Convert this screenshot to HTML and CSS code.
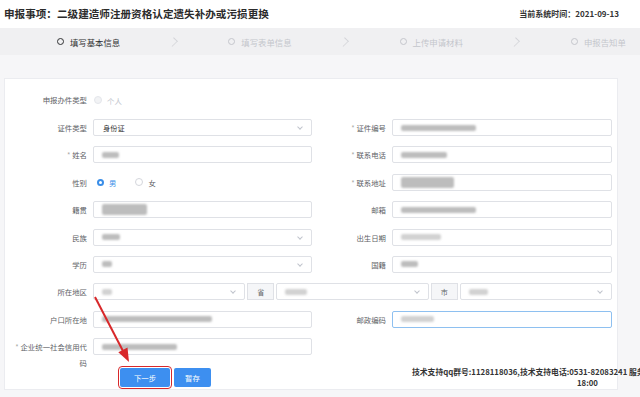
FILE: index.html
```html
<!DOCTYPE html>
<html lang="zh-CN">
<head>
  <meta charset="UTF-8" />
  <title>申报事项</title>
  <link rel="stylesheet" href="styles.css">
</head>
<body>
  <div class="header">
    <div class="title">申报事项：二级建造师注册资格认定遗失补办或污损更换</div>
    <div class="time">当前系统时间：2021-09-13</div>
  </div>

  <div class="steps">
    <div class="step active"><span class="ring"></span>填写基本信息</div>
    <div class="sep"><span class="chev"></span></div>
    <div class="step"><span class="ring"></span>填写表单信息</div>
    <div class="sep"><span class="chev"></span></div>
    <div class="step"><span class="ring"></span>上传申请材料</div>
    <div class="sep"><span class="chev"></span></div>
    <div class="step"><span class="ring"></span>申报告知单</div>
  </div>

  <div class="card">
    <div class="type-row">
      <label class="lbl">申报办件类型</label>
      <span class="radio disabled"></span><span class="opt muted">个人</span>
    </div>

    <div class="form">
      <div class="field">
        <label class="lbl">证件类型</label>
        <div class="ctl select"><span class="val">身份证</span><i class="arrow"></i></div>
      </div>
      <div class="field right">
        <label class="lbl"><em>*</em> 证件编号</label>
        <div class="ctl"><span class="blur w75"></span></div>
      </div>

      <div class="field">
        <label class="lbl"><em>*</em> 姓名</label>
        <div class="ctl"><span class="blur w17"></span></div>
      </div>
      <div class="field right">
        <label class="lbl"><em>*</em> 联系电话</label>
        <div class="ctl"><span class="blur w46"></span></div>
      </div>

      <div class="field">
        <label class="lbl">性别</label>
        <div class="radios">
          <span class="radio checked"></span><span class="opt blue">男</span>
          <span class="radio"></span><span class="opt">女</span>
        </div>
      </div>
      <div class="field right">
        <label class="lbl"><em>*</em> 联系地址</label>
        <div class="ctl"><span class="blur w53 tall"></span></div>
      </div>

      <div class="field">
        <label class="lbl">籍贯</label>
        <div class="ctl"><span class="blur w45 tall"></span></div>
      </div>
      <div class="field right">
        <label class="lbl">邮箱</label>
        <div class="ctl"><span class="blur w75"></span></div>
      </div>

      <div class="field">
        <label class="lbl">民族</label>
        <div class="ctl select"><span class="blur w18"></span><i class="arrow"></i></div>
      </div>
      <div class="field right">
        <label class="lbl">出生日期</label>
        <div class="ctl"><span class="blur w40 light"></span></div>
      </div>

      <div class="field">
        <label class="lbl">学历</label>
        <div class="ctl select"><span class="blur w10"></span><i class="arrow"></i></div>
      </div>
      <div class="field right">
        <label class="lbl">国籍</label>
        <div class="ctl"><span class="blur w17"></span></div>
      </div>

      <div class="field wide">
        <label class="lbl">所在地区</label>
        <div class="area">
          <div class="ctl select"><span class="blur w10 light"></span><i class="arrow"></i></div>
          <span class="addon">省</span>
          <div class="ctl select"><span class="blur w22 light"></span><i class="arrow"></i></div>
          <span class="addon">市</span>
          <div class="ctl select"><span class="blur w19 light"></span><i class="arrow"></i></div>
        </div>
      </div>

      <div class="field">
        <label class="lbl">户口所在地</label>
        <div class="ctl"><span class="blur w110"></span></div>
      </div>
      <div class="field right">
        <label class="lbl">邮政编码</label>
        <div class="ctl focus"><span class="blur w33 light"></span></div>
      </div>

      <div class="field">
        <label class="lbl wrap"><em>*</em> 企业统一社会信用代码</label>
        <div class="ctl"><span class="blur w75"></span></div>
      </div>
    </div>

    <div class="actions">
      <button class="btn next">下一步</button>
      <button class="btn save">暂存</button>
      <div class="support">
        <div class="line">技术支持qq群号:1128118036,技术支持电话:0531-82083241 服务</div>
        <div class="line second">18:00</div>
      </div>
    </div>
  </div>

  <svg class="mark" viewBox="0 0 640 397" width="640" height="397">
    <line x1="95" y1="297" x2="123" y2="351" stroke="#d8282a" stroke-width="2" />
    <polygon points="129,362 127.5,347.5 118.3,352.3" fill="#d8282a" />
  </svg>
</body>
</html>
```

FILE: styles.css
```css
body {
  margin: 0;
  width: 640px;
  height: 397px;
  overflow: hidden;
  position: relative;
  background-color: #f6f6f8;
  font-family: "Noto Sans CJK SC", "Noto Sans", sans-serif;
  color: #303133;
}
.header {
  height: 28px;
  background: #fff;
  display: flex;
  align-items: center;
  justify-content: space-between;
  padding: 0 21px 2px 4px;
  box-sizing: border-box;
}
.title {
  font-size: 10.6px;
  font-weight: bold;
  color: #2b2b2b;
}
.time {
  font-size: 8px;
  font-weight: bold;
  color: #333;
}
.steps {
  height: 27px;
  background: #f0f0f2;
  display: flex;
  align-items: center;
  padding-left: 57px;
  margin-bottom: 23px;
}
.step {
  width: 64px;
  display: flex;
  align-items: center;
  font-size: 8.4px;
  color: #c4c6cc;
  white-space: nowrap;
}
.step .ring {
  width: 5px;
  height: 5px;
  border: 1.2px solid #c4c6cc;
  border-radius: 50%;
  margin-right: 6px;
  flex: none;
}
.step.active {
  color: #303133;
}
.step.active .ring {
  border-color: #303133;
}
.sep {
  width: 107.3px;
  display: flex;
  justify-content: center;
}
.chev {
  width: 7px;
  height: 7px;
  border-top: 1px solid #d2d3d7;
  border-right: 1px solid #d2d3d7;
  transform: rotate(45deg) scaleX(0.7);
  margin-left: -4px;
}
.card {
  margin-left: 4px;
  width: 614px;
  box-sizing: border-box;
  background: #fff;
  border: 1px solid #ebecf0;
  padding: 13px 5px 2px 5px;
}
.lbl {
  width: 77px;
  margin-right: 6px;
  text-align: right;
  font-size: 7.4px;
  line-height: 17px;
  color: #606266;
  flex: none;
}
.lbl em {
  font-style: normal;
  color: #a8a8a8;
}
.lbl.wrap {
  line-height: 16px;
  margin-top: 1px;
}
.type-row {
  height: 16px;
  display: flex;
  align-items: center;
  margin-bottom: 11px;
}
.type-row .lbl {
  line-height: 16px;
}
.radio {
  width: 6px;
  height: 6px;
  border: 1px solid #d4d6dc;
  border-radius: 50%;
  background: #fff;
  margin: 0 5px 0 1px;
  flex: none;
}
.radio.disabled {
  background: #f2f3f5;
  border-color: #e4e6eb;
}
.radio.checked {
  width: 3px;
  height: 3px;
  border: 2.5px solid #3a8ee8;
}
.opt {
  font-size: 7.4px;
  color: #606266;
  margin-right: 18px;
}
.opt.muted {
  color: #c0c4cc;
}
.opt.blue {
  color: #3a8ee8;
}
.form {
  display: grid;
  grid-template-columns: 302px 300px;
  grid-auto-rows: 17px;
  row-gap: 10.4px;
}
.field {
  display: flex;
  align-items: flex-start;
}
.field.right .lbl {
  width: 74px;
}
.field.wide {
  grid-column: span 2;
}
.radios {
  height: 17px;
  display: flex;
  align-items: center;
  padding-left: 3px;
}
.ctl {
  flex: 1;
  height: 17px;
  box-sizing: border-box;
  border: 1px solid #dfe1e6;
  border-radius: 2px;
  background: #fff;
  display: flex;
  align-items: center;
  padding-left: 8px;
  position: relative;
}
.ctl.focus {
  border-color: #8ec0f0;
}
.val {
  font-size: 7.2px;
  color: #303133;
  padding-left: 1px;
}
.arrow {
  position: absolute;
  right: 9px;
  top: 5px;
  width: 3px;
  height: 3px;
  border-right: 1px solid #c0c4cc;
  border-bottom: 1px solid #c0c4cc;
  transform: rotate(45deg);
}
.area {
  flex: 1;
  display: flex;
  gap: 2px;
}
.addon {
  width: 27px;
  height: 17px;
  box-sizing: border-box;
  border: 1px solid #dfe1e6;
  background: #f5f6f8;
  font-size: 7px;
  color: #606266;
  display: flex;
  align-items: center;
  justify-content: center;
  flex: none;
}
.blur {
  height: 6px;
  background: #bdbdbd;
  filter: blur(1.3px);
  border-radius: 2px;
}
.blur.light {
  background: #d2d2d2;
}
.blur.tall {
  height: 11px;
}
.w10 { width: 10px; }
.w17 { width: 17px; }
.w18 { width: 18px; }
.w19 { width: 19px; }
.w22 { width: 22px; }
.w33 { width: 33px; }
.w40 { width: 40px; }
.w45 { width: 45px; }
.w46 { width: 46px; }
.w53 { width: 53px; }
.w75 { width: 75px; }
.w110 { width: 110px; }
.actions {
  display: flex;
  align-items: flex-start;
  margin-top: 12.8px;
  height: 19px;
}
.btn {
  flex: none;
  height: 19px;
  border: none;
  border-radius: 2px;
  background: #3d8ff0;
  color: #fff;
  font-family: inherit;
  font-size: 7.4px;
  padding: 0;
}
.btn.next {
  width: 50px;
  margin-left: 110px;
  outline: 1.5px solid #d8282a;
  outline-offset: 1px;
}
.btn.save {
  width: 37px;
  margin-left: 4px;
}
.support {
  flex: none;
  margin-left: 201px;
  margin-top: -2px;
  font-size: 7.8px;
  font-weight: bold;
  color: #333;
  line-height: 11px;
  white-space: nowrap;
}
.support .second {
  padding-left: 165px;
}
.mark {
  position: absolute;
  left: 0;
  top: 0;
  pointer-events: none;
}
```
